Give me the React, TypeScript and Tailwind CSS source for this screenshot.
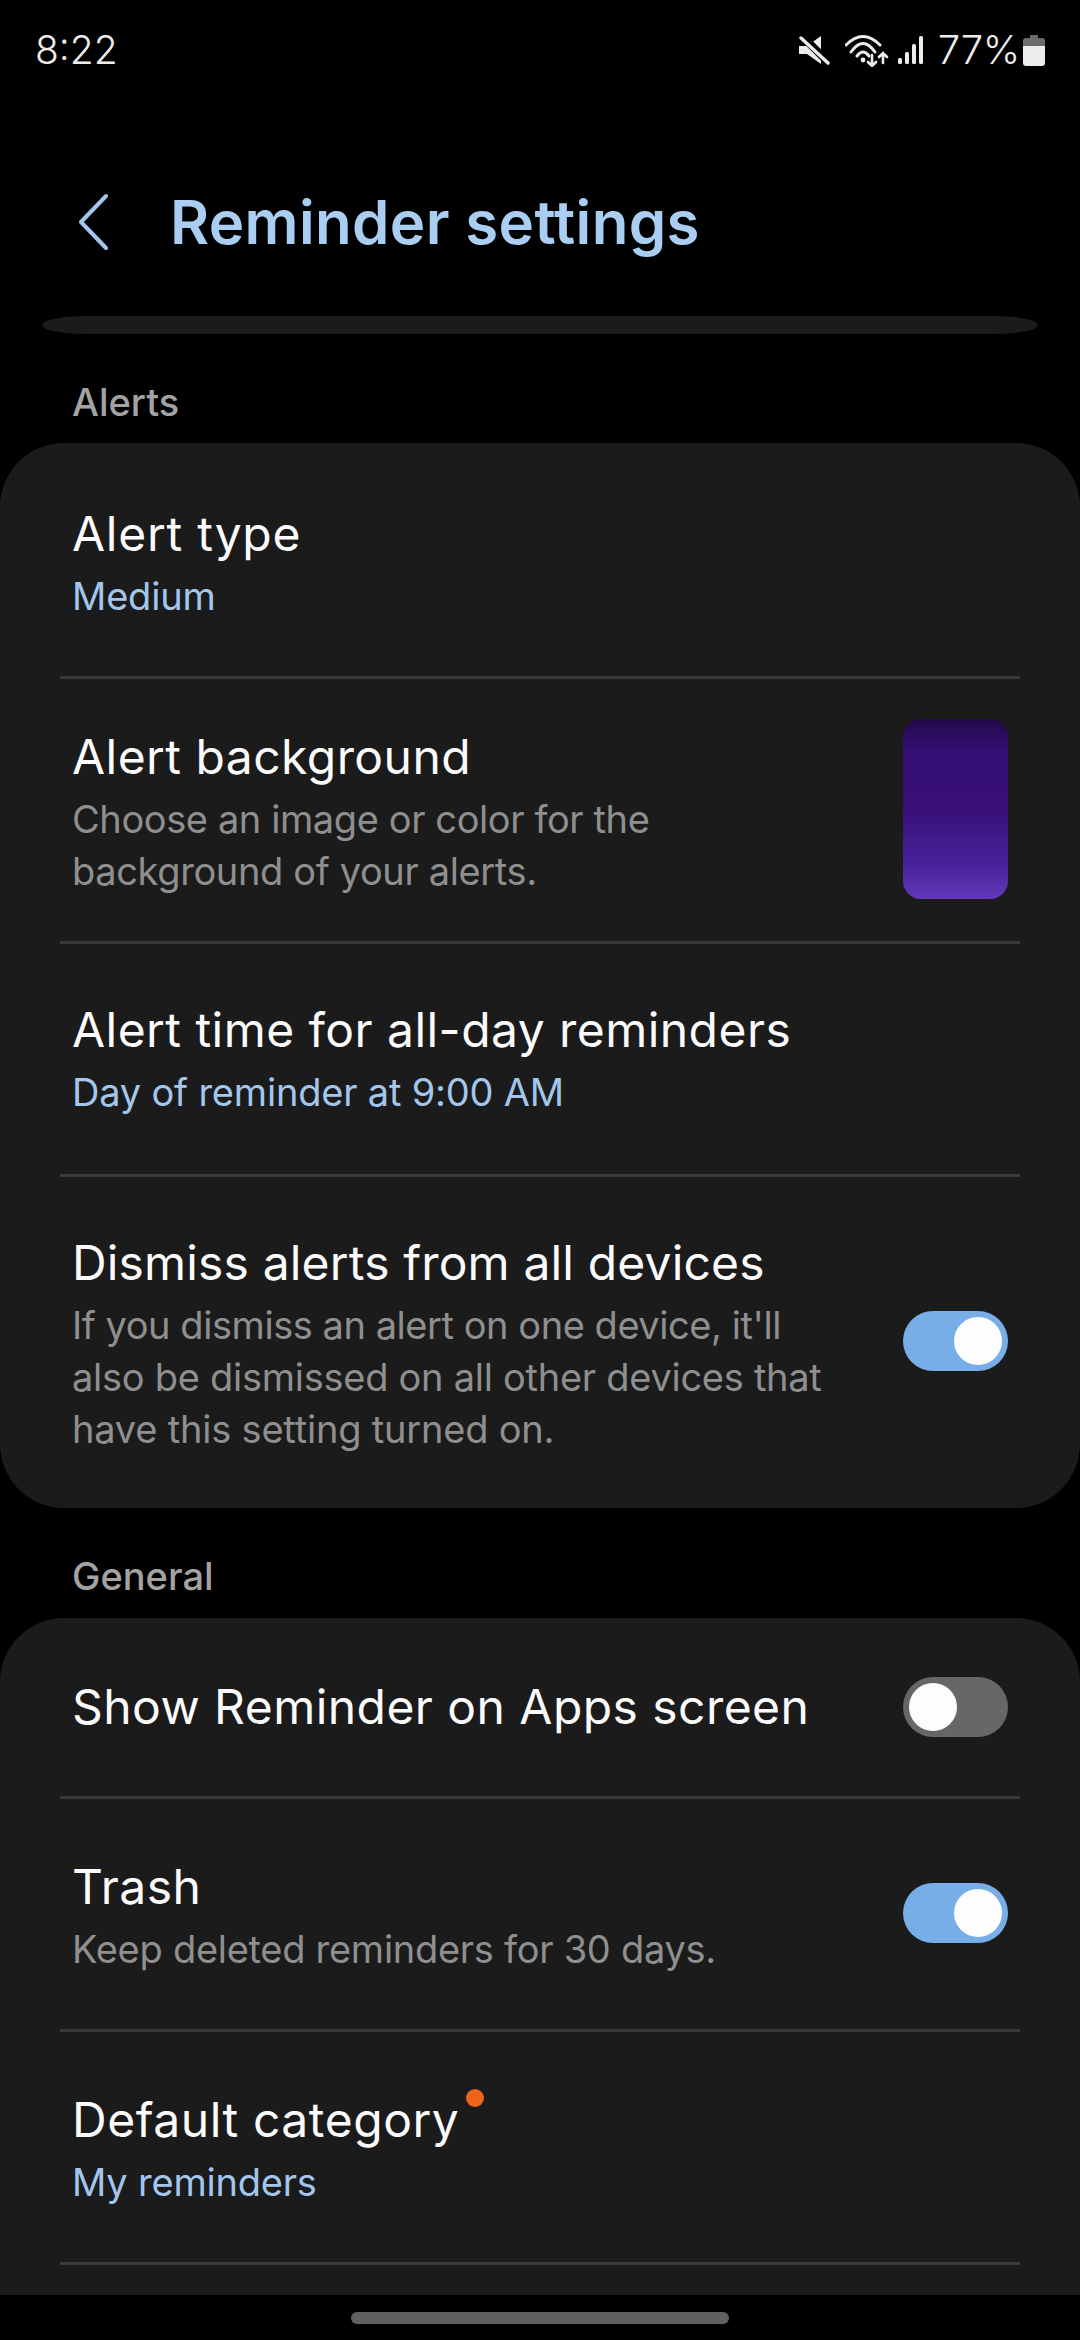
import React from "react";

function Toggle({ on }: { on: boolean }) {
  return (
    <div className={`w-[105px] h-[60px] shrink-0 rounded-full flex items-center px-[6px] ${on ? "bg-[#78aee8] justify-end" : "bg-[#67676a] justify-start"}`}>
      <div className="w-[48px] h-[48px] rounded-full bg-[#fdfdfd]" />
    </div>
  );
}

function Divider() {
  return <div className="mx-[60px] h-[3px] bg-[#3a3a3a]" />;
}

function Title({ children, track = "tracking-[0.45px]" }: { children: React.ReactNode; track?: string }) {
  return <div className={`text-[48px] leading-[72px] text-[#fafafa] ${track}`}>{children}</div>;
}

function Sub({ children, blue, track = "tracking-[-0.2px]" }: { children: React.ReactNode; blue?: boolean; track?: string }) {
  return (
    <div className={`text-[38px] leading-[52px] ${track} ${blue ? "text-[#a3c7ec]" : "text-[#8f8f8f]"}`}>
      {children}
    </div>
  );
}

function Row({ h, children, right }: { h: string; children: React.ReactNode; right?: React.ReactNode }) {
  return (
    <div className={`flex items-center justify-between pl-[72px] pr-[72px] ${h}`}>
      <div className="flex flex-col">{children}</div>
      {right}
    </div>
  );
}

function StatusIcons() {
  return (
    <div className="flex items-center">
      <svg width="32" height="32" viewBox="0 0 32 32" className="mr-[14px]">
        <path d="M0 12h8L22 2v28L8 20H0z" fill="#ececec" />
        <path d="M3 2l28 28" stroke="#000" strokeWidth="8" />
        <path d="M2 4l27 25" stroke="#ececec" strokeWidth="3.4" strokeLinecap="round" />
      </svg>
      <svg width="46" height="34" viewBox="0 0 46 34" fill="none" stroke="#ececec" strokeLinecap="round">
        <path d="M1 12Q18 -5 35 12" strokeWidth="3" />
        <path d="M6 19Q18 2 30 19" strokeWidth="3" />
        <path d="M12 23Q18 15 24 23" strokeWidth="3" />
        <circle cx="18" cy="27" r="2.4" fill="#ececec" stroke="none" />
        <path d="M27 22v11M23 29l4 4 4-4" strokeWidth="2.6" />
        <path d="M38 30V20M34 24l4-4 4 4" strokeWidth="2.6" />
      </svg>
      <svg width="28" height="30" viewBox="0 0 28 30" className="ml-[6px]" fill="#ececec">
        <rect x="1" y="23" width="4" height="6" rx="1.5" />
        <rect x="8" y="17" width="4" height="12" rx="1.5" />
        <rect x="15" y="9" width="4" height="20" rx="1.5" />
        <rect x="22" y="1" width="4" height="28" rx="1.5" />
      </svg>
      <span className="ml-[13px] text-[40px] leading-[44px] font-light text-[#ececec] tracking-[-0.3px]">77%</span>
      <svg width="22" height="32" viewBox="0 0 22 32" className="ml-[3px]">
        <path d="M7 1h8v3h4q3 0 3 3v5H0V7q0-3 3-3h4z" fill="#6c6c6c" />
        <path d="M0 12h22v17q0 3-3 3H3q-3 0-3-3z" fill="#ececec" />
      </svg>
    </div>
  );
}

export default function App() {
  return (
    <div className="w-[1080px] h-[2340px] bg-black flex flex-col overflow-hidden font-['Inter','Noto_Sans',sans-serif]">
      <div className="flex-1 min-h-0 overflow-hidden">
        <div className="h-[100px] flex items-center justify-between pl-[35px] pr-[35px]">
          <span className="text-[39px] leading-[44px] font-light text-[#ececec]">8:22</span>
          <StatusIcons />
        </div>
        <div className="h-[216px] flex items-start pt-[92px] pl-[78px]">
          <svg width="30" height="58" viewBox="0 0 30 58" fill="none" className="mt-[1px]">
            <path d="M28 3L3 29l25 26" stroke="#a3c7ec" strokeWidth="4" strokeLinecap="round" strokeLinejoin="round" />
          </svg>
          <h1 className="ml-[62px] text-[60px] leading-[60px] font-semibold text-[#aacdf2] tracking-[0.35px]">Reminder settings</h1>
        </div>
        <div className="mx-[42px] h-[18px] bg-[#1b1b1b] rounded-[42px/9px]" />
        <div className="h-[109px] pl-[72px] pt-[48px] text-[38px] leading-[40px] font-medium text-[#a3a3a3]">Alerts</div>
        <div className="bg-[#1b1b1b] rounded-[64px] h-[1065px]">
          <Row h="h-[233px]">
            <Title track="tracking-[0.75px]">Alert type</Title>
            <Sub blue>Medium</Sub>
          </Row>
          <Divider />
          <Row
            h="h-[262px] pb-[3px]"
            right={<div className="w-[105px] h-[180px] rounded-[18px] bg-[linear-gradient(180deg,#210a4a_0%,#350f74_18%,#381078_50%,#47229a_80%,#6237b8_100%)]" />}
          >
            <Title>Alert background</Title>
            <Sub track="tracking-[-0.4px]">Choose an image or color for the</Sub>
            <Sub track="tracking-[-0.37px]">background of your alerts.</Sub>
          </Row>
          <Divider />
          <Row h="h-[230px] pb-[6px]">
            <Title>Alert time for all-day reminders</Title>
            <Sub blue>Day of reminder at 9:00 AM</Sub>
          </Row>
          <Divider />
          <Row h="h-[331px] pb-[4px]" right={<Toggle on />}>
            <Title track="tracking-[0.16px]">Dismiss alerts from all devices</Title>
            <Sub track="tracking-[-0.45px]">If you dismiss an alert on one device, it'll</Sub>
            <Sub track="tracking-[-0.27px]">also be dismissed on all other devices that</Sub>
            <Sub>have this setting turned on.</Sub>
          </Row>
        </div>
        <div className="h-[110px] pl-[72px] pt-[48px] text-[38px] leading-[40px] font-medium text-[#a3a3a3]">General</div>
        <div className="bg-[#1b1b1b] rounded-t-[64px] h-[700px]">
          <Row h="h-[178px]" right={<Toggle on={false} />}>
            <Title>Show Reminder on Apps screen</Title>
          </Row>
          <Divider />
          <Row h="h-[230px] pb-[3px]" right={<Toggle on />}>
            <Title>Trash</Title>
            <Sub track="tracking-[-0.28px]">Keep deleted reminders for 30 days.</Sub>
          </Row>
          <Divider />
          <Row h="h-[230px] pb-[3px]">
            <Title track="tracking-[0.55px]">
              <span className="relative">
                Default category
                <span className="absolute right-[-25px] top-[-1px] w-[18px] h-[18px] rounded-full bg-[#f0631a]" />
              </span>
            </Title>
            <Sub blue>My reminders</Sub>
          </Row>
          <Divider />
        </div>
      </div>
      <div className="h-[45px] shrink-0 bg-black flex justify-center pt-[17px]">
        <div className="w-[378px] h-[12px] rounded-full bg-[#606060]" />
      </div>
    </div>
  );
}
